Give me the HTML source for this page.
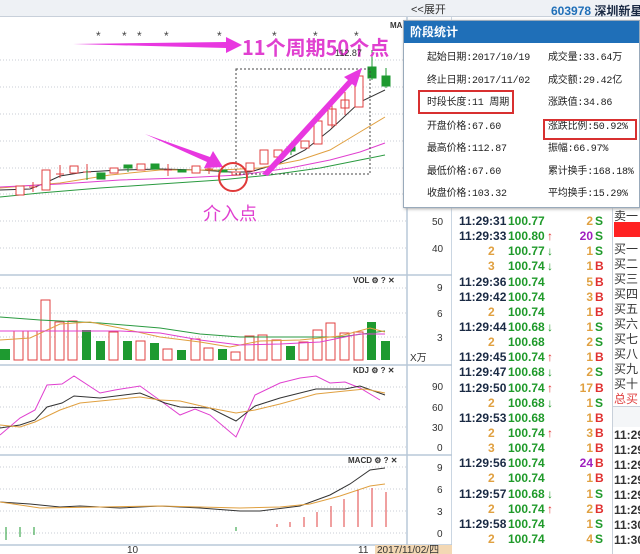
<!DOCTYPE html>
<html><head><meta charset="utf-8"><style>
*{margin:0;padding:0;box-sizing:border-box}
body{width:640px;height:554px;overflow:hidden;background:#fff;position:relative;font-family:"Liberation Sans","Noto Sans CJK SC",sans-serif}
.a{position:absolute;white-space:nowrap}
.tb{position:absolute;left:0;top:0;width:640px;height:17px;background:#eef1f5;border-bottom:1px solid #c8d0da}
.t{font-weight:bold;color:#1a2a44;font-size:12px}
.p{font-weight:bold;color:#1f9a2a;font-size:12px}
.pop{position:absolute;left:403px;top:20px;width:237px;height:188px;background:#fff;border:1px solid #9ab;box-shadow:1px 1px 3px #aaa}
.pop .h{height:22px;background:#1f6fb8;color:#fff;font-weight:bold;font-size:12px;line-height:22px;padding-left:6px}
.pop .c{position:absolute;font-size:10px;line-height:12px;color:#222;white-space:nowrap;letter-spacing:-0.2px;font-family:"Liberation Mono","Noto Sans CJK SC",monospace}
.rc{position:absolute;left:614px;font-size:12px;color:#333}
</style></head><body>
<div class="tb"></div>
<div class="a" style="left:411px;top:1px;font-size:11px;color:#333">&lt;&lt;展开</div>
<div class="a" style="left:551px;top:2px;font-size:12px;font-weight:bold;color:#1f6fb8">603978 <span style="color:#1a2a44">深圳新星</span></div>

<svg class="a" style="left:0;top:17px" width="452" height="537" viewBox="0 17 452 537">
<g stroke="#c8ccd4" stroke-dasharray="1,2" stroke-width="1">
<line x1="0" y1="60" x2="406" y2="60"/><line x1="0" y1="87" x2="406" y2="87"/><line x1="0" y1="114" x2="406" y2="114"/><line x1="0" y1="141" x2="406" y2="141"/><line x1="0" y1="168" x2="406" y2="168"/><line x1="0" y1="194" x2="406" y2="194"/><line x1="0" y1="221" x2="406" y2="221"/><line x1="0" y1="248" x2="406" y2="248"/>
<line x1="0" y1="288" x2="406" y2="288"/><line x1="0" y1="313" x2="406" y2="313"/><line x1="0" y1="337" x2="406" y2="337"/>
<line x1="0" y1="387" x2="406" y2="387"/><line x1="0" y1="407" x2="406" y2="407"/><line x1="0" y1="427" x2="406" y2="427"/><line x1="0" y1="447" x2="406" y2="447"/>
<line x1="0" y1="467" x2="406" y2="467"/><line x1="0" y1="489" x2="406" y2="489"/><line x1="0" y1="511" x2="406" y2="511"/><line x1="0" y1="533" x2="406" y2="533"/>
</g>
<g stroke="#b8c8d8" stroke-width="1.5" fill="none">
<line x1="0" y1="275" x2="452" y2="275"/><line x1="0" y1="365" x2="452" y2="365"/><line x1="0" y1="455" x2="452" y2="455"/><line x1="0" y1="545" x2="452" y2="545"/>
<line x1="407" y1="17" x2="407" y2="554"/><line x1="452" y1="17" x2="452" y2="554"/>
</g>
<g fill="none" stroke-width="1">
<polyline stroke="#333" points="0,190 30,189 45,183 60,176 85,172 120,170 160,169 200,170 230,172 250,172 280,163 305,150 330,130 360,102 385,90"/>
<polyline stroke="#e0a040" points="0,188 60,183 110,175 160,170 220,170 260,168 300,160 330,150 360,132 385,117"/>
<polyline stroke="#e040d0" points="0,187 60,184 120,180 180,178 240,175 290,168 330,160 360,152 385,143"/>
<polyline stroke="#2a9a40" points="0,197 40,193 100,188 160,184 220,180 270,175 320,168 360,160 385,155"/>
</g>
<g stroke="#e04040" fill="#fff" stroke-width="1">
<rect x="16" y="186" width="8" height="9"/><line x1="33" y1="182" x2="33" y2="192"/><line x1="29" y1="187" x2="37" y2="187"/>
<rect x="42" y="170" width="8" height="20"/><line x1="60" y1="165" x2="60" y2="178"/><line x1="56" y1="174" x2="64" y2="174"/>
<rect x="70" y="166" width="8" height="7"/><line x1="87" y1="164" x2="87" y2="178"/><line x1="83" y1="172" x2="91" y2="172"/>
<rect x="110" y="168" width="8" height="5"/><rect x="137" y="164" width="8" height="6"/>
<line x1="168" y1="164" x2="168" y2="176"/><line x1="164" y1="170" x2="172" y2="170"/>
<rect x="192" y="166" width="8" height="7"/><line x1="209" y1="164" x2="209" y2="174"/><line x1="205" y1="169" x2="213" y2="169"/>
<rect x="232" y="172" width="8" height="3"/><rect x="246" y="163" width="8" height="8"/>
<rect x="260" y="150" width="8" height="14"/><rect x="274" y="150" width="8" height="7"/>
<rect x="301" y="141" width="8" height="7"/><rect x="314" y="121" width="8" height="23"/>
<rect x="328" y="109" width="8" height="16"/><line x1="332" y1="100" x2="332" y2="128"/>
<rect x="341" y="100" width="8" height="8"/><line x1="345" y1="92" x2="345" y2="115"/>
<rect x="355" y="76" width="8" height="31"/>
</g>
<g fill="#1e9a30" stroke="#1e9a30">
<rect x="97" y="173" width="8" height="6"/><rect x="124" y="165" width="8" height="3"/><line x1="128" y1="165" x2="128" y2="172"/>
<rect x="151" y="164" width="8" height="5"/><rect x="178" y="170" width="8" height="2"/><rect x="219" y="170" width="8" height="2"/>
<rect x="287" y="147" width="8" height="4"/><line x1="291" y1="144" x2="291" y2="155"/>
<line x1="87" y1="170" x2="87" y2="180"/>
<rect x="368" y="67" width="8" height="11"/><line x1="372" y1="50" x2="372" y2="80"/>
<rect x="382" y="76" width="8" height="10"/><line x1="386" y1="68" x2="386" y2="88"/>
</g>
<rect x="236" y="69" width="134" height="105" fill="none" stroke="#444" stroke-dasharray="2,2"/>
<g fill="#e838e0">
<polygon points="73,44 226,42 226,37 242,45 226,53 226,48"/>
<polygon points="145,134 210,157 213,151 223,167 204,168 207,162"/>
<polygon points="262,174 348,80 344,77 362,68 356,87 352,84 268,176"/>
</g>
<circle cx="233" cy="177" r="14" fill="none" stroke="#e03a3a" stroke-width="2"/>
<text x="203" y="220" font-size="18" fill="#e040d0" font-family="Noto Sans CJK SC">介入点</text>
<text x="242" y="55" font-size="20" fill="#e040d0" font-family="Noto Sans CJK SC" font-weight="bold">11个周期50个点</text>
<text x="335" y="56" font-size="9" fill="#333">112.87</text>
<text x="390" y="28" font-size="8" fill="#333" font-weight="bold">MA</text>
<g font-size="12" fill="#444"><text x="96" y="40">*</text><text x="122" y="40">*</text><text x="137" y="40">*</text><text x="164" y="40">*</text><text x="217" y="40">*</text><text x="272" y="40">*</text><text x="313" y="40">*</text><text x="354" y="40">*</text></g>
<g stroke="#e04040" fill="#fff">
<rect x="14" y="331" width="9" height="29"/><rect x="28" y="331" width="9" height="29"/><rect x="41" y="300" width="9" height="60"/><rect x="55" y="322" width="9" height="38"/><rect x="68" y="321" width="9" height="39"/><rect x="109" y="332" width="9" height="28"/><rect x="136" y="341" width="9" height="19"/><rect x="163" y="349" width="9" height="11"/><rect x="191" y="339" width="9" height="21"/><rect x="204" y="348" width="9" height="12"/><rect x="231" y="352" width="9" height="8"/><rect x="245" y="336" width="9" height="24"/><rect x="258" y="335" width="9" height="25"/><rect x="272" y="340" width="9" height="20"/><rect x="299" y="342" width="9" height="18"/><rect x="313" y="330" width="9" height="30"/><rect x="326" y="323" width="9" height="37"/><rect x="340" y="333" width="9" height="27"/><rect x="354" y="332" width="9" height="28"/>
</g>
<g fill="#1e9a30">
<rect x="0" y="349" width="10" height="11"/><rect x="82" y="330" width="9" height="30"/><rect x="96" y="341" width="9" height="19"/><rect x="123" y="341" width="9" height="19"/><rect x="150" y="343" width="9" height="17"/><rect x="177" y="350" width="9" height="10"/><rect x="218" y="349" width="9" height="11"/><rect x="286" y="346" width="9" height="14"/><rect x="367" y="322" width="9" height="38"/><rect x="381" y="341" width="9" height="19"/>
</g>
<g fill="none">
<polyline stroke="#2a9a40" points="0,317 40,320 100,323 160,328 200,334 240,337 300,337 340,337 385,331"/>
<polyline stroke="#e0a040" points="0,340 30,338 60,324 90,322 120,328 160,337 200,342 230,347 260,341 300,340 340,336 370,328 385,332"/>
<polyline stroke="#e040d0" points="0,331 40,331 80,331 120,331 160,333 200,340 240,345 280,344 320,342 360,334 385,334"/>
</g>
<text x="353" y="283" font-size="8" fill="#333" font-weight="bold">VOL ⚙ ? ✕</text>
<text x="353" y="373" font-size="8" fill="#333" font-weight="bold">KDJ ⚙ ? ✕</text>
<text x="348" y="463" font-size="8" fill="#333" font-weight="bold">MACD ⚙ ? ✕</text>
<g fill="none">
<polyline stroke="#e040d0" points="0,435 20,418 35,410 47,385 62,384 74,376 100,393 115,390 140,386 165,404 180,415 195,409 210,415 236,437 255,395 280,383 300,378 316,376 330,383 345,382 360,388 380,400"/>
<polyline stroke="#333" points="0,428 20,425 35,420 47,407 62,403 74,396 100,398 140,393 165,403 180,407 210,408 236,421 255,406 280,398 316,389 345,389 360,386 385,395"/>
<polyline stroke="#e0a040" points="0,425 20,427 35,422 60,410 80,403 140,397 160,400 180,401 210,408 236,413 255,410 280,404 316,394 345,391 365,389 385,393"/>
</g>
<g fill="none">
<polyline stroke="#333" points="0,502 30,504 60,507 80,506 120,508 160,506 200,508 240,511 260,511 300,506 330,495 350,484 370,470 385,468"/>
<polyline stroke="#e0a040" points="0,502 40,508 100,507 160,506 240,508 280,507 310,504 340,496 370,486 385,484"/>
</g>
<g stroke="#e04040"><line x1="317" y1="512" x2="317" y2="527"/><line x1="331" y1="506" x2="331" y2="527"/><line x1="344" y1="499" x2="344" y2="527"/><line x1="358" y1="490" x2="358" y2="527"/><line x1="372" y1="488" x2="372" y2="527"/><line x1="386" y1="492" x2="386" y2="527"/><line x1="290" y1="522" x2="290" y2="527"/><line x1="304" y1="517" x2="304" y2="527"/><line x1="277" y1="524" x2="277" y2="527"/></g>
<g stroke="#1e9a30"><line x1="6" y1="527" x2="6" y2="540"/><line x1="20" y1="527" x2="20" y2="537"/><line x1="34" y1="527" x2="34" y2="535"/><line x1="236" y1="527" x2="236" y2="531"/></g>
<g font-size="10" fill="#333">
<text x="432" y="225">50</text><text x="432" y="252">40</text>
<text x="437" y="291">9</text><text x="437" y="317">6</text><text x="437" y="341">3</text><text x="410" y="361">X万</text>
<text x="432" y="390">90</text><text x="432" y="411">60</text><text x="432" y="431">30</text><text x="437" y="451">0</text>
<text x="437" y="471">9</text><text x="437" y="493">6</text><text x="437" y="515">3</text><text x="437" y="537">0</text>
<text x="127" y="553">10</text><text x="358" y="553">11</text>
</g>
<rect x="375" y="545" width="77" height="9" fill="#f3d8b4"/>
<text x="377" y="553" font-size="10" fill="#333">2017/11/02/四</text>
</svg>

<div style="position:absolute;left:452px;top:17px;width:160px;height:537px;font-size:12px">
<div id="tr"></div>
</div>
<div class="a" style="left:612px;top:207px;width:1px;height:347px;background:#c8d0da"></div>
<div class="a" style="left:614px;top:222px;width:26px;height:15px;background:#f22"></div>
<div class="rc" style="top:207px">卖一</div>
<div class="rc" style="top:240px">买一</div><div class="rc" style="top:255px">买二</div><div class="rc" style="top:270px">买三</div><div class="rc" style="top:285px">买四</div><div class="rc" style="top:300px">买五</div><div class="rc" style="top:315px">买六</div><div class="rc" style="top:330px">买七</div><div class="rc" style="top:345px">买八</div><div class="rc" style="top:360px">买九</div><div class="rc" style="top:375px">买十</div>
<div class="rc" style="top:390px;color:#e04040">总买量</div>
<div class="a" style="left:613px;top:406px;width:27px;height:1px;background:#c8d0da"></div>
<div class="a" style="left:613px;top:407px;width:27px;height:20px;background:#f4f6f8"></div>
<div class="rc t" style="top:428px">11:29</div><div class="rc t" style="top:443px">11:29</div><div class="rc t" style="top:458px">11:29</div><div class="rc t" style="top:473px">11:29</div><div class="rc t" style="top:488px">11:29</div><div class="rc t" style="top:503px">11:29</div><div class="rc t" style="top:518px">11:30</div><div class="rc t" style="top:533px">11:30</div>

<div class="pop"><div class="h">阶段统计</div>
<div class="c" style="left:23px;top:32px">起始日期:2017/10/19</div><div class="c" style="left:144px;top:32px">成交量:33.64万</div>
<div class="c" style="left:23px;top:55px">终止日期:2017/11/02</div><div class="c" style="left:144px;top:55px">成交额:29.42亿</div>
<div class="c" style="left:23px;top:77px">时段长度:11 周期</div><div class="c" style="left:144px;top:77px">涨跌值:34.86</div>
<div class="c" style="left:23px;top:101px">开盘价格:67.60</div><div class="c" style="left:144px;top:101px">涨跌比例:50.92%</div>
<div class="c" style="left:23px;top:123px">最高价格:112.87</div><div class="c" style="left:144px;top:123px">振幅:66.97%</div>
<div class="c" style="left:23px;top:146px">最低价格:67.60</div><div class="c" style="left:144px;top:146px">累计换手:168.18%</div>
<div class="c" style="left:23px;top:168px">收盘价格:103.32</div><div class="c" style="left:144px;top:168px">平均换手:15.29%</div>
<div style="position:absolute;left:14px;top:69px;width:96px;height:24px;border:2px solid #d83030"></div>
<div style="position:absolute;left:139px;top:98px;width:94px;height:21px;border:2px solid #d83030"></div>
</div>
<script>
var R=[["11:29:31","100.77","","2","S",0],["11:29:33","100.80","u","20","S",1],["2","100.77","d","1","S",0],["3","100.74","d","1","B",0],["11:29:36","100.74","","5","B",0],["11:29:42","100.74","","3","B",0],["2","100.74","","1","B",0],["11:29:44","100.68","d","1","S",0],["2","100.68","","2","S",0],["11:29:45","100.74","u","1","B",0],["11:29:47","100.68","d","2","S",0],["11:29:50","100.74","u","17","B",0],["2","100.68","d","1","S",0],["11:29:53","100.68","","1","B",0],["2","100.74","u","3","B",0],["3","100.74","","1","B",0],["11:29:56","100.74","","24","B",1],["2","100.74","","1","B",0],["11:29:57","100.68","d","1","S",0],["2","100.74","u","2","B",0],["11:29:58","100.74","","1","S",0],["2","100.74","","4","S",0]];
var h="";R.forEach(function(r,i){var y=197+i*15.14;var tm=r[0].length>2?'<div class="a t" style="left:7px;top:'+y+'px">'+r[0]+'</div>':'<div class="a" style="left:36px;top:'+y+'px;color:#e0a040;font-weight:bold">'+r[0]+'</div>';
h+=tm+'<div class="a p" style="left:56px;top:'+y+'px">'+r[1]+'</div>';
if(r[2])h+='<div class="a" style="left:95px;top:'+y+'px;font-weight:bold;color:'+(r[2]=="u"?"#e03030":"#1f9a2a")+'">'+(r[2]=="u"?"↑":"↓")+'</div>';
h+='<div class="a" style="right:19px;top:'+y+'px;font-weight:bold;color:'+(r[5]?"#a020c0":"#e0a040")+'">'+r[3]+'</div>';
h+='<div class="a" style="left:143px;top:'+y+'px;font-weight:bold;color:'+(r[4]=="B"?"#e03030":"#1f9a2a")+'">'+r[4]+'</div>';});
document.getElementById("tr").innerHTML=h;
</script>
</body></html>
